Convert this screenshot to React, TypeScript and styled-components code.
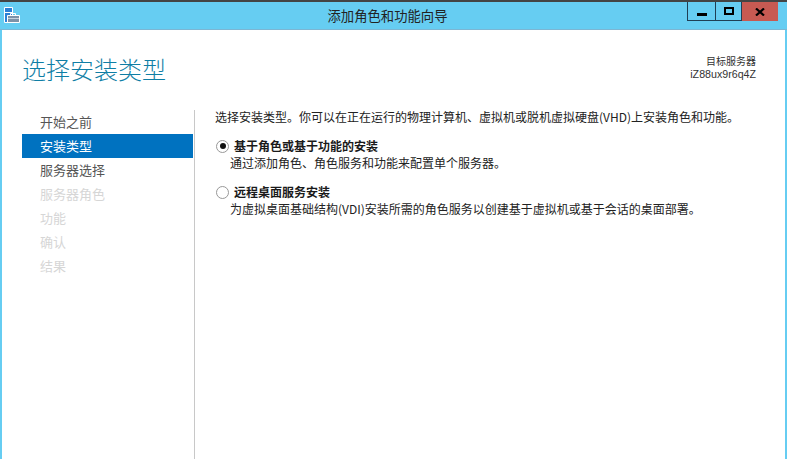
import React from "react";
import styled, { createGlobalStyle } from "styled-components";

const CJK = `"Noto Sans CJK SC", "Noto Sans", sans-serif`;

const Global = createGlobalStyle`
  html, body { margin: 0; padding: 0; background: #fff; }
  body { font-family: ${CJK}; }
`;

const Window = styled.div`
  width: 787px;
  height: 459px;
  background: #66cdf2;
  overflow: hidden;
  display: flex;
  flex-direction: column;
  border-top: 2px solid #444;
  box-sizing: border-box;
`;

const TitleBar = styled.div`
  position: relative;
  height: 28px;
  flex: none;
  display: flex;
  align-items: center;
  justify-content: center;
  padding-right: 12px;
  box-shadow: inset 0 -1px 0 #7cb6d3;
`;

const TitleText = styled.div`
  font-size: 13.33px;
  line-height: 20px;
  color: #222;
  margin-bottom: 1px;
`;

const AppIcon = styled.svg`
  position: absolute;
  left: 4px;
  top: 5px;
`;

const Controls = styled.div`
  position: absolute;
  top: 0;
  right: 9px;
  display: flex;
  height: 19px;
`;

const Control = styled.div<{ $close?: boolean; $w: number }>`
  width: ${(p) => p.$w}px;
  box-sizing: border-box;
  display: flex;
  align-items: center;
  justify-content: center;
  background: ${(p) => (p.$close ? "#c75a52" : "transparent")};
  border-left: 1px solid #1f3f55;
  border-bottom: ${(p) => (p.$close ? "none" : "1px solid #1f3f55")};
`;

const MinGlyph = styled.svg`
  margin-top: 6px;
`;

const Page = styled.div`
  flex: 1;
  margin: 0 2px;
  background: #fff;
  display: flex;
  flex-direction: column;
  min-height: 0;
`;

const Header = styled.div`
  height: 80px;
  flex: none;
  display: flex;
  justify-content: space-between;
  align-items: flex-start;
  padding: 0 29px 0 20px;
`;

const Heading = styled.h1`
  margin: 21px 0 0;
  font-size: 24px;
  line-height: 36px;
  font-weight: 300;
  color: #0f7ea5;
`;

const Target = styled.div`
  margin-top: 24px;
  text-align: right;
  font-size: 10px;
  line-height: 13px;
  color: #333;
`;

const Serial = styled.div`
  font-family: "Liberation Sans", sans-serif;
  font-size: 10.67px;
  line-height: 14px;
`;

const Body = styled.div`
  flex: 1;
  display: flex;
  min-height: 0;
`;

const Nav = styled.nav`
  width: 193px;
  flex: none;
  box-sizing: border-box;
  padding-left: 20px;
  border-right: 1px solid #c8c8c8;
`;

const NavItem = styled.div<{ $state: "normal" | "active" | "off" }>`
  width: 171px;
  height: 24px;
  box-sizing: border-box;
  padding-left: 18px;
  font-size: 13px;
  line-height: 24px;
  background: ${(p) => (p.$state === "active" ? "#0072c0" : "transparent")};
  color: ${(p) =>
    p.$state === "active" ? "#fff" : p.$state === "off" ? "#d6d6d6" : "#555"};
`;

const Main = styled.div`
  flex: 1;
  padding: 0 0 0 20px;
  font-size: 12px;
  color: #222;
`;

const Intro = styled.div`
  line-height: 14px;
  margin-bottom: 14px;
`;

const Option = styled.div`
  margin-bottom: 12px;
`;

const OptionTitle = styled.label`
  display: flex;
  align-items: center;
  gap: 5px;
  height: 16px;
  font-weight: 700;
  color: #1a1a1a;
  line-height: 16px;
`;

const Radio = styled.span<{ $on?: boolean }>`
  width: 13px;
  height: 13px;
  margin-left: 1px;
  box-sizing: border-box;
  flex: none;
  border-radius: 50%;
  border: 1px solid #989898;
  background: #fff;
  display: flex;
  align-items: center;
  justify-content: center;
  &::after {
    content: "";
    width: 6px;
    height: 6px;
    border-radius: 50%;
    background: ${(p) => (p.$on ? "#111" : "transparent")};
  }
`;

const OptionDesc = styled.div`
  padding-left: 15px;
  line-height: 18px;
`;

const nav: [string, "normal" | "active" | "off"][] = [
  ["开始之前", "normal"],
  ["安装类型", "active"],
  ["服务器选择", "normal"],
  ["服务器角色", "off"],
  ["功能", "off"],
  ["确认", "off"],
  ["结果", "off"],
];

export default function App() {
  return (
    <>
      <Global />
      <Window>
        <TitleBar>
          <AppIcon width="16" height="16" viewBox="0 0 16 16">
            <path d="M0.5 0.5H8.5V15.5H0.5Z" fill="#2c80d6" stroke="#fff" />
            <path d="M0.5 5.5H8.5" stroke="#fff" />
            <path d="M3.5 8.5H15.5V15.5H3.5Z" fill="#7d92a8" stroke="#fff" />
            <path d="M6.5 8.5V6.5H11.5V8.5" fill="none" stroke="#fff" />
            <path d="M4 11.5H15" stroke="#c5d2de" />
          </AppIcon>
          <TitleText>添加角色和功能向导</TitleText>
          <Controls>
            <Control $w={28}>
              <MinGlyph width="10" height="3" viewBox="0 0 10 3">
                <rect width="10" height="3" fill="#000" />
              </MinGlyph>
            </Control>
            <Control $w={26}>
              <svg width="10" height="8" viewBox="0 0 10 8">
                <path d="M1 1H9V7H1Z" fill="none" stroke="#000" strokeWidth="2" />
              </svg>
            </Control>
            <Control $w={37} $close>
              <svg width="10" height="8" viewBox="0 0 10 8">
                <path d="M1 0.5L9 7.5M9 0.5L1 7.5" stroke="#000" strokeWidth="2.2" />
              </svg>
            </Control>
          </Controls>
        </TitleBar>
        <Page>
          <Header>
            <Heading>选择安装类型</Heading>
            <Target>
              目标服务器
              <Serial>iZ88ux9r6q4Z</Serial>
            </Target>
          </Header>
          <Body>
            <Nav>
              {nav.map(([t, s]) => (
                <NavItem key={t} $state={s}>
                  {t}
                </NavItem>
              ))}
            </Nav>
            <Main>
              <Intro>选择安装类型。你可以在正在运行的物理计算机、虚拟机或脱机虚拟硬盘(VHD)上安装角色和功能。</Intro>
              <Option>
                <OptionTitle>
                  <Radio $on />
                  基于角色或基于功能的安装
                </OptionTitle>
                <OptionDesc>通过添加角色、角色服务和功能来配置单个服务器。</OptionDesc>
              </Option>
              <Option>
                <OptionTitle>
                  <Radio />
                  远程桌面服务安装
                </OptionTitle>
                <OptionDesc>为虚拟桌面基础结构(VDI)安装所需的角色服务以创建基于虚拟机或基于会话的桌面部署。</OptionDesc>
              </Option>
            </Main>
          </Body>
        </Page>
      </Window>
    </>
  );
}
